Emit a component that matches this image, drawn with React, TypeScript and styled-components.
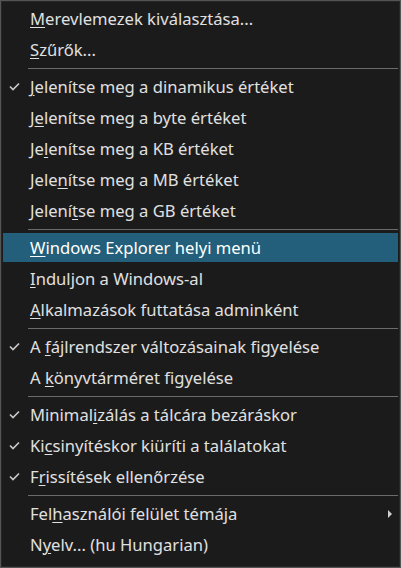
import React from 'react';
import styled, { createGlobalStyle } from 'styled-components';

const GlobalStyle = createGlobalStyle`
  html, body {
    margin: 0;
    padding: 0;
    background: #1c1c1c;
  }
`;

const Menu = styled.div`
  box-sizing: border-box;
  width: 401px;
  height: 568px;
  padding: 2px 2px;
  background: #1b1b1b;
  border: 1px solid #555555;
  box-shadow: inset 0 0 0 1px #262626;
  display: flex;
  flex-direction: column;
  font-family: 'Noto Sans', 'Open Sans', sans-serif;
  font-size: 16.6px;
  color: #e0e0e0;
  user-select: none;
`;

const Item = styled.div<{ $active?: boolean }>`
  position: relative;
  height: 29px;
  margin: 1px 0;
  display: flex;
  align-items: center;
  padding-left: 27px;
  background: ${p => (p.$active ? '#235f7b' : 'transparent')};
  color: ${p => (p.$active ? '#ffffff' : '#e0e0e0')};
  white-space: nowrap;
`;

const CheckSlot = styled.span`
  position: absolute;
  left: 6px;
  top: 50%;
  width: 11px;
  height: 9px;
  margin-top: -5px;
  display: flex;
`;

const Arrow = styled.span`
  position: absolute;
  right: 6px;
  top: 50%;
  margin-top: -4px;
  width: 0;
  height: 0;
  border-top: 4px solid transparent;
  border-bottom: 4px solid transparent;
  border-left: 4px solid #cfcfcf;
`;

const Separator = styled.div`
  height: 6px;
  display: flex;
  align-items: center;
  padding-left: 25px;

  &::after {
    content: '';
    flex: 1;
    height: 1px;
    background: #6b6b6b;
  }
`;

const Key = styled.span`
  text-decoration: underline;
  text-underline-offset: 2px;
  text-decoration-thickness: 1px;
`;

type Entry =
  | { sep: true }
  | { sep?: false; text: string; key: number; checked?: boolean; active?: boolean; submenu?: boolean };

const entries: Entry[] = [
  { text: 'Merevlemezek kiválasztása...', key: 0 },
  { text: 'Szűrők...', key: 0 },
  { sep: true },
  { text: 'Jelenítse meg a dinamikus értéket', key: 0, checked: true },
  { text: 'Jelenítse meg a byte értéket', key: 1 },
  { text: 'Jelenítse meg a KB értéket', key: 2 },
  { text: 'Jelenítse meg a MB értéket', key: 4 },
  { text: 'Jelenítse meg a GB értéket', key: 6 },
  { sep: true },
  { text: 'Windows Explorer helyi menü', key: 0, active: true },
  { text: 'Induljon a Windows-al', key: 0 },
  { text: 'Alkalmazások futtatása adminként', key: 0 },
  { sep: true },
  { text: 'A fájlrendszer változásainak figyelése', key: 2, checked: true },
  { text: 'A könyvtárméret figyelése', key: 2 },
  { sep: true },
  { text: 'Minimalizálás a tálcára bezáráskor', key: 7, checked: true },
  { text: 'Kicsinyítéskor kiüríti a találatokat', key: 2, checked: true },
  { text: 'Frissítések ellenőrzése', key: 1, checked: true },
  { sep: true },
  { text: 'Felhasználói felület témája', key: 3, submenu: true },
  { text: 'Nyelv... (hu Hungarian)', key: 1 },
];

const CheckMark = () => (
  <svg width="11" height="9" viewBox="0 0 11 9">
    <polyline points="1,4.5 4,7.5 10,1.5" fill="none" stroke="#c8c8c8" strokeWidth="1.7" />
  </svg>
);

const Label = ({ text, index }: { text: string; index: number }) => (
  <span>
    {text.slice(0, index)}
    <Key>{text[index]}</Key>
    {text.slice(index + 1)}
  </span>
);

export default function App() {
  return (
    <>
      <GlobalStyle />
      <Menu>
        {entries.map((e, i) =>
          e.sep ? (
            <Separator key={i} />
          ) : (
            <Item key={i} $active={e.active}>
              {e.checked && (
                <CheckSlot>
                  <CheckMark />
                </CheckSlot>
              )}
              <Label text={e.text} index={e.key} />
              {e.submenu && <Arrow />}
            </Item>
          )
        )}
      </Menu>
    </>
  );
}
